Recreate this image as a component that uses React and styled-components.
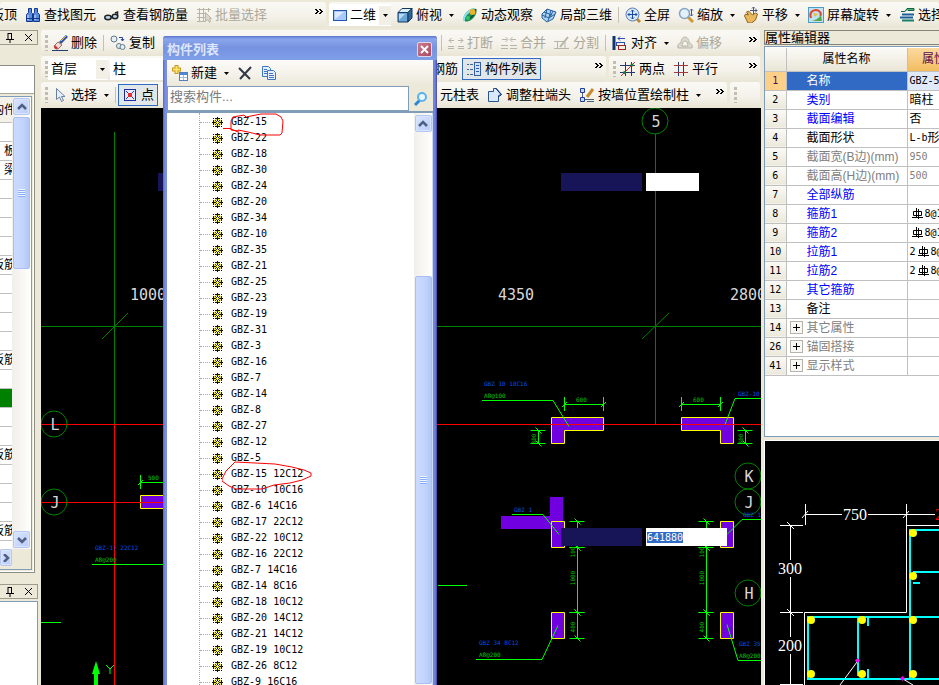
import React from 'react';
import styled, { createGlobalStyle, css } from 'styled-components';

const GlobalStyle = createGlobalStyle`
  * {
    box-sizing: border-box;
  }

  body {
    margin: 0;
    overflow: hidden;
    background: #ece9d8;
    color: #000;
    font: 13px/16px 'Liberation Sans', 'Noto Sans CJK SC', sans-serif;
  }

  button,
  input,
  select {
    margin: 0;
    padding: 0;
    border: 0;
    border-radius: 0;
    background: none;
    color: inherit;
    font: inherit;
    outline: none;
  }

  button {
    flex: none;
    white-space: nowrap;
  }

  svg {
    display: block;
    flex: none;
  }
`;

const Page = styled.div`
  height: 100vh;
  display: flex;
  flex-direction: column;
  position: relative;
`;

const Workspace = styled.div`
  flex: 1;
  min-height: 0;
  display: grid;
  grid-template-columns: 41px minmax(0, 1fr) 178px;
`;

const Center = styled.main`
  display: flex;
  flex-direction: column;
  min-height: 0;
`;

/* ---------- toolbars ---------- */

const ToolRow = styled.div`
  flex: none;
  display: flex;
  height: 26px;
  gap: 3px;
  padding-right: 1px;
  overflow: hidden;
`;

const TopRow = styled(ToolRow)`
  height: 30px;
  padding: 2px 0;
`;

const Band = styled.div`
  flex: ${(p) => (p.$width ? `0 0 ${p.$width}px` : '1')};
  min-width: 0;
  display: flex;
  align-items: center;
  overflow: hidden;
  border-radius: 3px;
  background: linear-gradient(#faf9f5, #f3f1e8 60%, #e9e5d5);
`;

/* the part of a row which sits left of the floating window */
const BandHead = styled.div`
  flex: 0 0 ${(p) => p.$width}px;
  display: flex;
  align-items: center;
  justify-content: ${(p) => (p.$end ? 'flex-end' : 'flex-start')};
  overflow: hidden;
`;

const Grip = styled.span`
  flex: none;
  width: 3px;
  height: 16px;
  margin: 0 0 0 4px;
  background: repeating-linear-gradient(#c1beb0 0 3px, transparent 3px 5px);
`;

const Separator = styled.span`
  flex: none;
  width: 1px;
  height: 16px;
  margin: 0 2px;
  background: #c5c2b5;
`;

const Tool = styled.button`
  display: flex;
  align-items: center;
  gap: 3px;
  height: 22px;
  padding: 0 4px;
  color: ${(p) => (p.disabled ? '#aca899' : '#000')};
  ${(p) =>
    p.$active &&
    css`
      padding: 0 3px;
      border: 1px solid #316ac5;
      background: #e1e6e8;
    `}
`;

const ArrowBox = styled.span`
  display: flex;
  margin-left: 4px;
`;

const Chevron = styled.button`
  display: flex;
  margin-left: auto;
  padding: 0 3px 8px;
`;

const Combo = styled.label`
  flex: 0 0 ${(p) => p.$width}px;
  display: flex;
  align-items: center;
  height: 22px;
  margin-right: 2px;
  padding-left: 3px;
  gap: 2px;
  background: #fff;

  select {
    flex: 1;
    min-width: 0;
    height: 20px;
    appearance: none;
  }

  > span {
    display: flex;
    align-items: center;
    justify-content: center;
    width: 12px;
    height: 19px;
    background: #f1efe6;
  }
`;

/* ---------- scroll bars ---------- */

const ScrollTrack = styled.div`
  flex: none;
  width: 19px;
  display: flex;
  flex-direction: column;
  align-items: center;
  padding: 1px;
  background: linear-gradient(90deg, #f1efea, #fefefb);
`;

const ScrollButton = styled.button`
  display: flex;
  align-items: center;
  justify-content: center;
  width: 17px;
  height: 17px;
  border: 1px solid #b5c7f0;
  border-radius: 2px;
  background: linear-gradient(135deg, #dbe5fe, #b8cbf9);
  box-shadow: inset 0 0 0 1px #d9e4fd;
`;

const Thumb = styled.div`
  width: 17px;
  height: ${(p) => p.$height};
  flex: ${(p) => (p.$height ? 'none' : '1')};
  margin: 2px 0 auto;
  display: flex;
  align-items: center;
  justify-content: center;
  border: 1px solid #a9bff0;
  border-radius: 2px;
  background: linear-gradient(90deg, #cbdafe, #c2d4fd 60%, #b3c8f6);

  &::after {
    content: '';
    width: 7px;
    height: 8px;
    background: repeating-linear-gradient(#eef4fe 0 1px, #8cb0f8 1px 2px);
  }
`;

/* ---------- left dock ---------- */

const LeftDock = styled.aside`
  display: flex;
  flex-direction: column;
  min-height: 0;
  padding-right: 3px;
`;

const DockTitle = styled.div`
  flex: none;
  display: flex;
  align-items: center;
  justify-content: flex-end;
  gap: 10px;
  height: 15px;
  padding-right: 4px;
  border: 1px solid #9d9a8e;
  border-left: 0;

  button {
    display: flex;
  }
`;

const DockPanel = styled.div`
  display: flex;
  flex-direction: column;
  height: 508px;
  margin: 20px 3px 11px 0;
  border: solid #8d8d88;
  border-width: 1px 1px 1px 0;
  box-shadow: inset -1px -1px 0 #fff;
`;

const DockHead = styled.div`
  height: 28px;
  border-bottom: 1px solid #a9a797;
  background: #fff;
`;

const DockBody = styled.div`
  flex: 1;
  min-height: 0;
  display: flex;
  margin: 2px 2px 0 0;
  border: solid #7f9db9;
  border-width: 1px 1px 0 0;
  background: #fff;
`;

const DockFoot = styled.div`
  display: flex;
  height: 21px;
  margin: 0 2px 2px 0;
  border: solid #7f9db9;
  border-width: 0 1px 1px 0;

  button {
    width: 12px;
  }
`;

const DockRows = styled.ul`
  flex: 1;
  min-width: 0;
  margin: 0;
  padding: 0;
  overflow: hidden;
  list-style: none;
  font-size: 12px;
`;

const DockRow = styled.li`
  display: flex;
  align-items: center;
  justify-content: flex-end;
  height: ${(p) => (p.$head ? 26 : 19)}px;
  margin-right: -4px;
  overflow: hidden;
  white-space: nowrap;
  border-bottom: 1px solid #c0c0c0;
  background: ${(p) => (p.$green ? '#008000' : p.$head ? '#f3f1e8' : '#fff')};
`;

const DockEmpty = styled.div`
  flex: 1;
  margin-top: 2px;
  border: solid #7f9db9;
  border-width: 1px 1px 0 0;
  background: #fff;
`;

/* ---------- drawing area ---------- */

const DrawingArea = styled.section`
  flex: 1;
  min-height: 0;
  position: relative;
  overflow: hidden;
  background: #000;
`;

const CanvasBar = styled.label`
  position: absolute;
  left: ${(p) => p.$x}px;
  top: ${(p) => p.$y}px;
  width: 81px;
  height: 18px;
  background: #181458;
`;

const CanvasInput = styled.input`
  position: absolute;
  left: 605px;
  top: ${(p) => p.$y}px;
  width: ${(p) => p.$width}px;
  height: 18px;
  padding: 0 1px;
  background: #fff;
  font: 10px/12px 'DejaVu Sans Mono', monospace;

  &::selection {
    background: #316ac5;
    color: #fff;
  }
`;

/* ---------- floating window ---------- */

const FloatWindow = styled.section`
  position: absolute;
  left: 163px;
  top: 36px;
  bottom: 0;
  width: 274px;
  display: flex;
  flex-direction: column;
  padding: 0 4px;
  border-radius: 3px 3px 0 0;
  background: linear-gradient(90deg, #5663c8, #7b8fe2 2px, #6f84dc 272px, #4a45a8);
`;

const WindowTitle = styled.header`
  display: flex;
  align-items: center;
  justify-content: space-between;
  height: 24px;
  margin: 0 -4px;
  padding: 3px 5px 0 4px;
  border-radius: 3px 3px 0 0;
  background: linear-gradient(#5a72d0, #8aa6ec 3px, #7692e0 12px, #7f9fe8);
  color: #dde5fa;
  font-weight: bold;
`;

const CloseButton = styled.button`
  display: flex;
  align-items: center;
  justify-content: center;
  width: 15px;
  height: 15px;
  border: 1px solid #dfd6ea;
  border-radius: 2px;
  background: linear-gradient(135deg, #cb7b8c, #a94a62);
`;

const WindowTools = styled.div`
  display: flex;
  align-items: center;
  height: 26px;
  padding-left: 1px;
  background: linear-gradient(#fcfbf8, #f3f1e8 60%, #ebe7d8);
`;

const SearchRow = styled.form`
  display: flex;
  height: 25px;
  background: #ece9d8;

  input {
    flex: 1;
    min-width: 0;
    padding: 0 2px 4px;
    border: 1px solid #7f9db9;
    background: #fff;
  }

  input::placeholder {
    color: #7b7b7b;
    opacity: 1;
  }

  button {
    width: 24px;
    display: flex;
    align-items: center;
    justify-content: center;
  }
`;

const TreeBox = styled.div`
  flex: 1;
  min-height: 0;
  display: flex;
  position: relative;
  overflow: hidden;
  border-top: 2px solid #7f9db9;
  background: #fff;
`;

const Tree = styled.ul`
  flex: 1;
  margin: 0 0 0 32px;
  padding: 1px 0 0;
  list-style: none;
  border-left: 1px dotted #aca899;
`;

const TreeItem = styled.li`
  display: flex;
  align-items: center;
  height: 16px;
  white-space: pre;
  font: 10px/16px 'DejaVu Sans Mono', monospace;

  &::before {
    content: '';
    width: 10px;
    margin-right: 2px;
    border-top: 1px dotted #aca899;
  }

  svg {
    margin-right: 8px;
  }
`;

const TreeScroll = styled(ScrollTrack)`
  border-right: 1px solid #cdd9ef;
  padding-top: 2px;
`;

const TrackGap = styled.span`
  flex: 0 0 142px;
`;

const Markup = styled.svg`
  position: absolute;
  left: 55px;
  top: 0;
  pointer-events: none;
`;

/* ---------- right dock ---------- */

const RightDock = styled.aside`
  display: flex;
  flex-direction: column;
  min-height: 0;
  overflow: hidden;
  padding-left: 3px;
`;

const PropertyTitle = styled.h2`
  flex: none;
  height: 15px;
  margin: 0 0 1px;
  border: solid #85837b;
  border-width: 1px 0 1px 1px;
  font-size: 13px;
  font-weight: normal;
  line-height: 13px;
`;

const PropertyBox = styled.div`
  flex: 0 0 391px;
  padding: 1px 0;
  overflow: hidden;
  border: 1px solid #7f9db9;
  border-right: 0;
  background: #fff;
`;

const PropertyTable = styled.table`
  width: 208px;
  table-layout: fixed;
  border-collapse: collapse;
  font-size: 12px;

  th,
  td {
    height: 19px;
    padding: 0 0 0 2px;
    overflow: hidden;
    white-space: nowrap;
    text-align: left;
    font-weight: normal;
    line-height: 16px;
    border: solid #c0c0c0;
    border-width: 0 1px 1px 0;
  }

  thead th {
    height: 23px;
    padding: 0;
    text-align: center;
    background: linear-gradient(#fbfaf6, #e9e6d7);
  }

  thead th:last-child {
    background: linear-gradient(#fcd9a0, #f2bd60);
    color: #5b0a4f;
  }

  tbody th {
    padding: 0;
    text-align: center;
    font: 10px/16px 'DejaVu Sans Mono', monospace;
    background: linear-gradient(#fbfaf6, #ebe8da);
  }
`;

const NumberCell = styled.th`
  && {
    ${(p) => p.$selected && 'background: #fdd08a; color: #5b0a4f;'}
  }
`;

const NameCell = styled.td`
  && {
    padding-left: ${(p) => (p.$group ? 3 : 20)}px;
  }
  color: ${(p) => p.$color};
  background: ${(p) => (p.$selected ? '#316ac5' : '#fff')};
`;

const ValueCell = styled.td`
  color: ${(p) => p.$color};
  background: ${(p) => (p.$selected ? '#dfe9f8' : '#fff')};
`;

const Latin = styled.span`
  font: 10px/16px 'DejaVu Sans Mono', monospace;
`;

const CellFlex = styled.span`
  display: flex;
  align-items: center;
  gap: ${(p) => p.$gap}px;
`;

const Expand = styled.button`
  display: flex;
  align-items: center;
  justify-content: center;
  width: 13px;
  height: 13px;
  border: 1px solid #b5b3aa;
  background: #f8f8f5;
`;

const SectionView = styled.div`
  flex: 1;
  min-height: 0;
  margin-top: 3px;
  overflow: hidden;
  border: solid #fff;
  border-width: 1px 0 0 1px;
  background: #000;
`;

/* ---------- icons ---------- */

const shapes = {
  binoculars: (
    <g stroke="#10398c" fill="#5b8be0">
      <path d="M3.500 1.500h3v4l1 1v8h-6v-7l2-2zM9.500 1.500h3v4l2 2v7h-6v-8l1-1z" />
      <path d="M3 8v5M10 8v5" stroke="#dbe9ff" />
      <path d="M1.500 11.500h6M8.500 11.500h6" />
    </g>
  ),
  glasses: (
    <g fill="#b9d4ea" stroke="#222" strokeWidth="1.500">
      <ellipse cx="4" cy="10.500" rx="3.200" ry="2.200" />
      <ellipse cx="11" cy="9.500" rx="2.800" ry="2.200" />
      <path d="M7 10h2M13.500 9V5l-2.500 1" fill="none" />
    </g>
  ),
  batch: (
    <g stroke="#b7b4a8" fill="none">
      <path d="M1 2.500h14M1 6.500h9M1 10.500h8M1 14.500h8M3.500 1v14M7.500 1v14M12.500 1v4" />
      <path d="M9.500 5.500v9l2-2 2 3 1-1-1-3h2z" fill="#d9d6ca" />
    </g>
  ),
  plane: (
    <g>
      <rect x="1.500" y="3.500" width="13" height="10" fill="#a9c9fb" stroke="#2354b4" />
      <path d="M3 12V5h9z" fill="#dcebff" />
    </g>
  ),
  cube: (
    <g stroke="#17375f">
      <path d="M1 5.500l4-4h10l-4 4z" fill="#d9f0ff" />
      <path d="M1 5.500h10v9.500H1z" fill="#6aa7d8" />
      <path d="M11 5.500l4-4V11l-4 4z" fill="#2d6699" />
      <path d="M2 7h6l-6 6z" fill="#b9dcf4" stroke="none" />
    </g>
  ),
  orbit: (
    <g>
      <ellipse cx="8" cy="8" rx="4.500" ry="8" transform="rotate(45 8 8)" fill="#1d8f50" />
      <path d="M2 14c-1-4 3-9 9-12" stroke="#8de0f4" strokeWidth="2" fill="none" />
      <path d="M7 12c3-2 6-5 7-10" stroke="#0b5335" fill="none" strokeWidth="1.500" />
      <circle cx="10.500" cy="5" r="3" fill="#e8b22a" />
      <circle cx="6" cy="11" r="2" fill="#35c26b" />
    </g>
  ),
  mesh: (
    <g stroke="#2a5f9e" fill="#a9d4f4">
      <path d="M1 7l5-5 9 3-3 7-6 3-5-4z" />
      <path d="M3 5l8 3M6 2l-2 9M10 3l-3 11M1 8l7 3 6-4M12 4l-3 6" fill="none" />
    </g>
  ),
  fullscreen: (
    <g>
      <path d="M11 11l4 4" stroke="#b98b30" strokeWidth="3" />
      <circle cx="7.500" cy="7.500" r="6.500" fill="#d5e6fa" stroke="#5f7fae" />
      <path d="M7.500 3v9M3 7.500h9M6 4.500l1.500-1.500L9 4.500M6 10.500L7.500 12 9 10.500M4.500 6L3 7.500 4.500 9M10.500 6L12 7.500 10.500 9" stroke="#1b4a9c" fill="none" />
    </g>
  ),
  zoom: (
    <g>
      <path d="M10 10l5 5" stroke="#cf9a35" strokeWidth="3" />
      <circle cx="6.500" cy="6.500" r="5" fill="#e2f1fb" stroke="#88a4c4" strokeWidth="1.500" />
      <path d="M13.500 2v7M12 3.500L13.500 2 15 3.500M12 7.500L13.500 9 15 7.500" stroke="#365a9a" fill="none" />
    </g>
  ),
  hand: (
    <g>
      <path d="M1.500 9l1-2 3 1-2-3 2-1 4 4 3-2 2 1-2 6-4 3H5z" fill="#e8b85a" stroke="#8c6220" />
      <path d="M10.500 0v7M7 3.500h7M9 1.500L10.500 0 12 1.500M12.500 2L14 3.500 12.500 5" stroke="#4c5875" fill="none" />
    </g>
  ),
  rotate: (
    <g>
      <rect x=".5" y=".5" width="15" height="15" fill="#bfe3f4" stroke="#4e9cc4" />
      <path d="M3 11C1 6 4 3 8 3s6 4 4 6" stroke="#e0432f" strokeWidth="2" fill="none" />
      <path d="M5 6l5 1-3 3z" fill="#e8c12c" />
      <path d="M4 14c3-1 6-2 9-6l1 6z" fill="#56a944" />
    </g>
  ),
  floors: (
    <g>
      <path d="M2 4.500h4l2-3h7v2H9" fill="#4bb07a" stroke="#146047" />
      <path d="M3 7.500h12M1 10.500h13" stroke="#185f9c" strokeWidth="2" />
      <path d="M3 13.500h12" stroke="#1b8068" strokeWidth="2" />
    </g>
  ),
  erase: (
    <g>
      <path d="M15 1L8 8" stroke="#31539c" strokeWidth="3" />
      <path d="M14 1L9 6" stroke="#e9b93f" />
      <path d="M6 7l4 3-4 4H4L2 11z" fill="#f0ded9" stroke="#9e6868" />
      <path d="M3 10l3 3-1 1H3l-1-2z" fill="#c93535" />
      <path d="M0 15.500h16" stroke="#223d73" />
    </g>
  ),
  copyTool: (
    <g fill="#e5eef4" stroke="#607886">
      <circle cx="4" cy="4" r="3" />
      <path d="M9 2.500h3.500v3M11 4l1.500 2L14 4" fill="none" stroke="#25439b" />
      <circle cx="9" cy="11" r="2.500" />
      <circle cx="12.500" cy="12" r="2.500" />
    </g>
  ),
  breakLine: (
    <g stroke="#b7b4a8" fill="none">
      <path d="M1 5.500h5M10 5.500h5M3.500 3L1 5.500 3.500 8M12.500 3L15 5.500 12.500 8" />
      <path d="M0 11.500h6M10 11.500h6M0 13.500h6M10 13.500h6" />
    </g>
  ),
  merge: (
    <g stroke="#b7b4a8" fill="none">
      <path d="M1 4.500h5M10 4.500h5M4.500 2L7 4.500 4.500 7M11.500 2L9 4.500 11.500 7" />
      <path d="M0 10.500h7M9 10.500h7M0 13.500h7M9 13.500h7" />
    </g>
  ),
  split: (
    <g stroke="#b7b4a8" fill="none">
      <path d="M0 6.500h10M0 13.500h15M3.500 13V7M11 13V7" />
      <path d="M14 2L6 12" strokeWidth="2" />
    </g>
  ),
  align: (
    <g fill="none">
      <path d="M2 1v14" stroke="#11376d" strokeWidth="3" />
      <path d="M6 3.500h7M8 1.500L6 3.500l2 2" stroke="#254fae" />
      <rect x="4.500" y="7.500" width="8" height="3" stroke="#254fae" />
      <rect x="6.500" y="10.500" width="7" height="4" stroke="#a12121" />
    </g>
  ),
  offset: (
    <g stroke="#b7b4a8" fill="#dcd9ce">
      <path d="M1 13c-1-3 1-5 3-5 0-4 2-6 4-6s4 2 4 6c2 0 4 2 3 5z" />
      <path d="M5 11c0-2 1-5 3-5s3 3 3 5z" fill="#f5f3ec" />
    </g>
  ),
  list: (
    <g>
      <path d="M1 3.500h2M1 8.500h2M1 13.500h2M4 3.500h3M4 8.500h3M4 13.500h3" stroke="#43658d" />
      <rect x="8.500" y="1.500" width="6" height="13" fill="#cfe2fb" stroke="#355f9f" />
      <path d="M10 4.500h3M10 7.500h3M10 10.500h3" stroke="#2d58ad" />
    </g>
  ),
  twoPoint: (
    <g stroke="#24356f" fill="none">
      <path d="M5.500 1v14M11.500 1v14M0 4.500h15M0 11.500h15" />
      <path d="M1 15L15 1" stroke="#d02a2a" />
      <circle cx="4.500" cy="11.500" r="1.500" fill="#1c7c25" stroke="none" />
      <circle cx="12" cy="4" r="1.500" fill="#1c7c25" stroke="none" />
    </g>
  ),
  parallel: (
    <g fill="none">
      <path d="M5.500 1v14M10.500 1v14" stroke="#24356f" />
      <path d="M1 4.500h14M1 11.500h14" stroke="#a33b3b" />
    </g>
  ),
  cursor: <path d="M4.500 1.500v11l3-2.500 2 4.500 2-1-2-4h3.500z" fill="#e6eefb" stroke="#6a7f9f" />,
  point: (
    <g>
      <rect x="2.500" y="2.500" width="11" height="11" fill="#e5e8ff" stroke="#1f2ca0" />
      <path d="M4 4l8 8M12 4l-8 8" stroke="#2d3cae" />
      <rect x="6" y="6" width="4" height="4" fill="#e03131" />
    </g>
  ),
  adjust: (
    <g fill="none">
      <path d="M1.500 4.500h5v-3h3l5 6-3 1v6h-10z" fill="#d9e8fa" stroke="#2c5391" />
      <path d="M8.500 1l6 7M11 10l3-2" stroke="#102f74" />
    </g>
  ),
  wallColumn: (
    <g fill="none">
      <path d="M1.500 1.500h4v4h-4zM1.500 10.500h4v4h-4z" stroke="#24409a" fill="#c6d8f8" />
      <path d="M3.500 6v4M6 12.500h9M8 14.500h7" stroke="#4e6079" />
      <path d="M14 2L8 10" stroke="#c88a31" strokeWidth="3" />
    </g>
  ),
  create: (
    <g>
      <path d="M4.500 0v9M0 4.500h9" stroke="#c8981c" strokeWidth="4" />
      <path d="M4.500 1v7M1 4.500h7" stroke="#fde36a" strokeWidth="2" />
      <rect x="7.500" y="7.500" width="8" height="8" fill="#fff" stroke="#5580bf" />
      <path d="M8 9h7" stroke="#4d88d8" strokeWidth="2" />
      <path d="M8 12.500h7M11.500 10v5" stroke="#9fbde6" />
    </g>
  ),
  remove: <path d="M2 3l11 11M14 2L3 14" stroke="#303846" strokeWidth="2" fill="none" />,
  copyDoc: (
    <g stroke="#4175bd" fill="#e3effc">
      <path d="M1.500 1.500h6l2 2v8h-8z" />
      <path d="M3 4.500h3M3 6.500h3M3 8.500h3" />
      <path d="M6.500 5.500h6l2 2v7h-8z" />
      <path d="M8 8.500h4M8 10.500h5M8 12.500h5" />
    </g>
  ),
  search: (
    <g fill="none">
      <path d="M6.500 9.500L2 14" stroke="#2f86d2" strokeWidth="3" />
      <circle cx="9" cy="6" r="4" fill="#e8f7ff" stroke="#5db1ea" strokeWidth="2" />
    </g>
  ),
};

const Icon = ({ name }) => (
  <svg width="16" height="16" viewBox="0 0 16 16" aria-hidden="true">
    {shapes[name]}
  </svg>
);

const Arrow = () => (
  <svg width="5" height="3" viewBox="0 0 5 3" aria-hidden="true">
    <path d="M0 0h5L2.500 3z" />
  </svg>
);

const angles = {
  up: 'M1 6l4-4 4 4',
  down: 'M1 2l4 4 4-4',
  right: 'M3 0l4 4-4 4',
};

const Angle = ({ to }) => (
  <svg width="10" height="8" viewBox="0 0 10 8" aria-hidden="true">
    <path d={angles[to]} fill="none" stroke="#4d6185" strokeWidth="2.500" />
  </svg>
);

const Cross = ({ color = '#000', width = 1 }) => (
  <svg width="9" height="9" viewBox="0 0 9 9" aria-hidden="true">
    <path d="M1 1l7 7M8 1L1 8" stroke={color} strokeWidth={width} />
  </svg>
);

const Pin = () => (
  <svg width="8" height="10" viewBox="0 0 8 10" aria-hidden="true">
    <path d="M2 0v6M2 .5h4M5.500 0v6M0 6.500h8M4 6v4" stroke="#000" fill="none" />
  </svg>
);

const Gear = () => (
  <svg width="11" height="11" viewBox="0 0 11 11" shapeRendering="crispEdges" aria-hidden="true">
    <path d="M5 0h1v11H5zM0 5h11v1H0zM3 1h2v2H3zM6 1h2v2H6zM3 8h2v2H3zM6 8h2v2H6zM1 3h2v2H1zM1 6h2v2H1zM8 3h2v2H8zM8 6h2v2H8z" fill="#111" />
    <path d="M1 1h1v1H1zM9 1h1v1H9zM1 9h1v1H1zM9 9h1v1H9z" fill="#111" />
    <path d="M3 2h2v1H3zM6 2h2v1H6zM3 8h2v1H3zM6 8h2v1H6zM2 3h2v2H2zM7 3h2v2H7zM2 6h2v2H2zM7 6h2v2H7zM4 4h3v3H4z" fill="#f4ec2c" />
    <path d="M4 4h1v1H4zM6 4h1v1H6zM4 6h1v1H4zM6 6h1v1H6zM3 3h1v1H3zM7 3h1v1H7zM3 7h1v1H3zM7 7h1v1H7z" fill="#333" />
    <path d="M5 5h1v1H5z" fill="#fff" />
  </svg>
);

const Rebar = () => (
  <svg width="11" height="11" viewBox="0 0 11 11" aria-hidden="true">
    <path d="M1.500 3.500h8v4h-8zM4.500 0v10M6.500 1v10M0 9.500h11" fill="none" stroke="#000" />
  </svg>
);

const ToolButton = ({ icon, label, menu, disabled, active }) => (
  <Tool type="button" disabled={disabled} $active={active}>
    {icon && <Icon name={icon} />}
    <span>{label}</span>
    {menu && (
      <ArrowBox>
        <Arrow />
      </ArrowBox>
    )}
  </Tool>
);

const More = () => (
  <Chevron type="button" aria-label="更多">
    <svg width="8" height="5" viewBox="0 0 8 5" shapeRendering="crispEdges">
      <path d="M0 0h2v1h1v1h1v1H3v1H2v1H0V4h1V3h1V2H1V1H0zM4 0h2v1h1v1h1v1H7v1H6v1H4V4h1V3h1V2H5V1H4z" />
    </svg>
  </Chevron>
);

const ComboBox = ({ width, icon, label, value }) => (
  <Combo $width={width}>
    {icon && <Icon name={icon} />}
    <select aria-label={label} defaultValue={value}>
      <option>{value}</option>
    </select>
    <span>
      <Arrow />
    </span>
  </Combo>
);

/* ---------- data ---------- */

const columns = [
  '15', '22', '18', '30', '24', '20', '34', '10', '35', '21', '25', '23',
  '19', '31', '3', '16', '7', '14', '8', '27', '12', '5', '15 12C12',
  '10 10C16', '6 14C16', '17 22C12', '22 10C12', '16 22C12', '7 14C16',
  '14 8C16', '18 10C12', '20 14C12', '21 14C12', '19 10C12', '26 8C12',
  '9 16C16',
];

const dockRows = [
  '', '板', '梁', '', '', '', '', '板筋', '', '', '', '', '板筋',
  '', 'green', '', '', '板筋', '', '', '', '板筋',
];

const properties = [
  { no: 1, name: '名称', latin: 'GBZ-5', color: '#fff', selected: true },
  { no: 2, name: '类别', value: '暗柱', color: '#00f' },
  { no: 3, name: '截面编辑', value: '否', color: '#00f' },
  { no: 4, name: '截面形状', latin: 'L-b', value: '形', color: '#000' },
  { no: 5, name: '截面宽(B边)(mm)', latin: '950', color: '#808080', muted: true },
  { no: 6, name: '截面高(H边)(mm)', latin: '500', color: '#808080', muted: true },
  { no: 7, name: '全部纵筋', color: '#00f' },
  { no: 8, name: '箍筋1', latin: '8@100', rebar: '', color: '#00f' },
  { no: 9, name: '箍筋2', latin: '8@100', rebar: '', color: '#00f' },
  { no: 10, name: '拉筋1', latin: '8@100', rebar: '2', color: '#00f' },
  { no: 11, name: '拉筋2', latin: '8@100', rebar: '2', color: '#00f' },
  { no: 12, name: '其它箍筋', color: '#00f' },
  { no: 13, name: '备注', color: '#000' },
  { no: 14, name: '其它属性', color: '#808080', group: true },
  { no: 26, name: '锚固搭接', color: '#808080', group: true },
  { no: 41, name: '显示样式', color: '#808080', group: true },
];

/* ---------- plan drawing ---------- */

const AxisMark = ({ x, y, label }) => (
  <g>
    <circle cx={x} cy={y} r="13" fill="none" stroke="#008000" />
    <text x={x + 1} y={y + 6} textAnchor="middle" fill="#d8d8d8" fontSize="15">
      {label}
    </text>
  </g>
);

const Note = ({ x, y, color = '#00c800', children }) => (
  <text x={x} y={y} fill={color} fontSize="6">
    {children}
  </text>
);

const Size = ({ x, y, children }) => (
  <text
    transform={`translate(${x} ${y}) rotate(-90)`}
    textAnchor="middle"
    fill="#00c800"
    fontSize="6"
  >
    {children}
  </text>
);

const Ticks = ({ x, y, height }) => (
  <path
    d={`M${x} ${y}v${height}M${x - 8} ${y}h15M${x - 8} ${y + height}h15
      M${x - 3} ${y - 3}l6 6M${x - 3} ${y + height - 3}l6 6`}
  />
);

const PlanDrawing = () => (
  <svg width="720" height="577" viewBox="41 108 720 577" fontFamily="DejaVu Sans Mono, monospace">
    <g stroke="#008000" fill="none">
      <path d="M114.500 132v292M655.500 134v290M41 326.500h720" />
      <path d="M102 339l26-26M642 339l27-26" />
    </g>
    <g fill="#7000e0">
      <path d="M550 497h13v32h-62v-13h49z" />
      <g stroke="#ff0">
        <path d="M140.500 495.500h40v13h-40z" />
        <path d="M551.500 417.500h52v13h-39v13h-13z" />
        <path d="M681.500 417.500h52v26h-13v-13h-39z" />
        <path d="M551.500 521.500h13v26h-13zM720.500 521.500h13v26h-13z" />
        <path d="M551.500 612.500h13v26h-13zM720.500 612.500h13v26h-13z" />
      </g>
    </g>
    <path d="M41 424.500h720M41 502.500h130M114.500 424v261" stroke="#f00" />
    <g stroke="#0f0" fill="none">
      <path d="M140.500 475v14M140 482.500h30M138 485l5-5M92 564.500h80M41 622.500h20M438 585.500h29" />
      <path d="M482 400.500h71l16 26M512 514.500h31l16 20M476 659.500h66l16-34" />
      <path d="M761 398.500h-26l-10 26M761 519.500h-19l-15 15M761 660.500h-23l-11-36" />
      <path d="M564.500 397v14M603.500 397v14M564 404.500h39M562 407l5-5M601 407l5-5" />
      <path d="M681.500 397v14M720.500 397v14M681 404.500h39M679 407l5-5M718 407l5-5" />
      <Ticks x={538.5} y={430.5} height={13} />
      <Ticks x={745.5} y={430.5} height={13} />
      <Ticks x={577.5} y={521.5} height={26} />
      <Ticks x={577.5} y={547.5} height={65} />
      <Ticks x={577.5} y={612.5} height={26} />
      <Ticks x={706.5} y={521.5} height={26} />
      <Ticks x={706.5} y={547.5} height={65} />
      <Ticks x={706.5} y={612.5} height={26} />
      <path d="M106 665l4 4 4-4M110 669v5" />
    </g>
    <path d="M94 685v-11h-2l4-13 4 13h-2v11z" fill="#0f0" />
    <AxisMark x={54} y={424} label="L" />
    <AxisMark x={54} y={502} label="J" />
    <AxisMark x={655} y={121} label="5" />
    <AxisMark x={748} y={476} label="K" />
    <AxisMark x={748} y={502} label="J" />
    <AxisMark x={748} y={593} label="H" />
    <g fill="#d8d8d8" fontSize="15">
      <text x="130" y="300">1000</text>
      <text x="498" y="300">4350</text>
      <text x="730" y="300">2800</text>
    </g>
    <Note x={95} y={550} color="#0050e0">GBZ-17 22C12</Note>
    <Note x={95} y={562}>A8@200</Note>
    <Note x={148} y={480}>500</Note>
    <Note x={484} y={386} color="#0050e0">GBZ 10 10C16</Note>
    <Note x={484} y={398}>A8@100</Note>
    <Note x={576} y={402}>600</Note>
    <Note x={693} y={402}>600</Note>
    <Note x={738} y={396} color="#0050e0">GBZ-10</Note>
    <Note x={514} y={512} color="#0050e0">GBZ 1</Note>
    <Note x={743} y={517} color="#0050e0">GBZ 1</Note>
    <Note x={479} y={645} color="#0050e0">GBZ 34 8C12</Note>
    <Note x={479} y={657}>A8@200</Note>
    <Note x={739} y={646} color="#0050e0">GBZ 35</Note>
    <Note x={739} y={658}>A8@200</Note>
    <Size x={536} y={439}>300</Size>
    <Size x={743} y={439}>300</Size>
    <Size x={575} y={552}>100</Size>
    <Size x={575} y={578}>1000</Size>
    <Size x={575} y={627}>400</Size>
    <Size x={704} y={552}>100</Size>
    <Size x={704} y={578}>1000</Size>
    <Size x={704} y={627}>400</Size>
  </svg>
);

const bars = [
  [811, 620], [862, 620], [913, 620], [811, 674],
  [862, 674], [913, 674], [913, 533], [913, 576],
];

const SectionDrawing = () => (
  <svg width="240" height="280" viewBox="765 441 240 280" fontFamily="Liberation Serif, serif" fontSize="16">
    <g stroke="#fff" fill="none">
      <path d="M805.500 504v21M906.500 504v108.500h-102V720M906 525.500h100" />
      <path d="M805 514.500h37M868 514.500h67M802 518l6-7M903 518l6-7" />
      <path d="M780 525.500h23M780 612.500h23M780 684.500h23M790.500 525v35M790.500 577v60M790.500 654v40" />
      <path d="M787 522l7 7M787 609l7 7M857 662l-17 23M903 679l10 6" />
    </g>
    <path
      d="M1000 530h-90v149M913 572h90M913 583h7M1000 617H808v62h190M858 617v59M868 617v9M868 669v9"
      stroke="#0ff"
      strokeWidth="2"
      fill="none"
    />
    {bars.map(([x, y]) => (
      <circle key={`${x}-${y}`} cx={x} cy={y} r="4" fill="#ff0" />
    ))}
    <path d="M857.500 658l2.500 2.500-2.500 2.500-2.500-2.500zM902.500 676l2.500 2.500-2.500 2.500-2.500-2.500z" fill="#f0f" />
    <g fill="#fff">
      <text x="843" y="520">750</text>
      <text x="778" y="574">300</text>
      <text x="778" y="651">200</text>
      <text x="935" y="520" fill="#f00">200</text>
    </g>
  </svg>
);

/* ---------- page parts ---------- */

const DockTitleBar = () => (
  <DockTitle>
    <button type="button" aria-label="固定">
      <Pin />
    </button>
    <button type="button" aria-label="关闭">
      <Cross />
    </button>
  </DockTitle>
);

const ComponentWindow = () => (
  <FloatWindow>
    <WindowTitle>
      <span>构件列表</span>
      <CloseButton type="button" aria-label="关闭">
        <Cross color="#fff" width={2} />
      </CloseButton>
    </WindowTitle>
    <WindowTools>
      <ToolButton icon="create" label="新建" menu />
      <Tool type="button" aria-label="删除构件">
        <Icon name="remove" />
      </Tool>
      <Tool type="button" aria-label="复制构件">
        <Icon name="copyDoc" />
      </Tool>
    </WindowTools>
    <SearchRow>
      <input aria-label="搜索构件" placeholder="搜索构件..." />
      <button type="button" aria-label="搜索">
        <Icon name="search" />
      </button>
    </SearchRow>
    <TreeBox>
      <Tree>
        {columns.map((name) => (
          <TreeItem key={name}>
            <Gear />
            GBZ-{name}
          </TreeItem>
        ))}
      </Tree>
      <TreeScroll>
        <ScrollButton type="button" aria-label="向上">
          <Angle to="up" />
        </ScrollButton>
        <TrackGap />
        <Thumb />
      </TreeScroll>
      <Markup width="100" height="380" viewBox="222 113 100 380" fill="none" stroke="#f00">
        <path d="M223 128.500h7l9 4M239 131l-8-1v-9l2-4 11-2 2 2 15-3h15l5 3 2 4-1 12-2 2h-20l-12-3-10-2" />
        <path d="M222 479l4-8 9-9 40 2 17 3 12 3 7 3v3l-9 4-12 3-16 2-12 4h-26l-7-3-7-5z" />
      </Markup>
    </TreeBox>
  </FloatWindow>
);

const PropertyEditor = () => (
  <PropertyBox>
    <PropertyTable>
      <colgroup>
        <col width="21" />
        <col width="121" />
        <col width="66" />
      </colgroup>
      <thead>
        <tr>
          <th />
          <th>属性名称</th>
          <th>属性值</th>
        </tr>
      </thead>
      <tbody>
        {properties.map((p) => (
          <tr key={p.no}>
            <NumberCell $selected={p.selected}>{p.no}</NumberCell>
            <NameCell $color={p.color} $selected={p.selected} $group={p.group}>
              {p.group ? (
                <CellFlex $gap={4}>
                  <Expand type="button" aria-label="展开">
                    <svg width="7" height="7" viewBox="0 0 7 7">
                      <path d="M0 3.500h7M3.500 0v7" stroke="#000" />
                    </svg>
                  </Expand>
                  {p.name}
                </CellFlex>
              ) : (
                p.name
              )}
            </NameCell>
            <ValueCell $color={p.muted ? '#808080' : '#000'} $selected={p.selected}>
              <CellFlex $gap={p.rebar === undefined ? 0 : 2}>
                {p.rebar !== undefined && (
                  <>
                    <Latin>{p.rebar}</Latin>
                    <Rebar />
                  </>
                )}
                {p.latin && <Latin>{p.latin}</Latin>}
                {p.value}
              </CellFlex>
            </ValueCell>
          </tr>
        ))}
      </tbody>
    </PropertyTable>
  </PropertyBox>
);

const App = () => {
  return (
    <Page>
      <GlobalStyle />
      <TopRow>
        <Band $width={326}>
          <BandHead $width={21} $end>
            <ToolButton label="板顶" />
          </BandHead>
          <ToolButton icon="binoculars" label="查找图元" />
          <ToolButton icon="glasses" label="查看钢筋量" />
          <ToolButton icon="batch" label="批量选择" disabled />
          <More />
        </Band>
        <Band>
          <ComboBox width={60} icon="plane" label="视图" value="二维" />
          <ToolButton icon="cube" label="俯视" menu />
          <ToolButton icon="orbit" label="动态观察" />
          <ToolButton icon="mesh" label="局部三维" />
          <Separator />
          <ToolButton icon="fullscreen" label="全屏" />
          <ToolButton icon="zoom" label="缩放" menu />
          <ToolButton icon="hand" label="平移" menu />
          <ToolButton icon="rotate" label="屏幕旋转" menu />
          <ToolButton icon="floors" label="选择楼层" />
        </Band>
      </TopRow>

      <Workspace>
        <LeftDock>
          <DockTitleBar />
          <DockPanel>
            <DockHead />
            <DockBody>
              <DockRows>
                <DockRow $head>构件</DockRow>
                {dockRows.map((text, i) => (
                  <DockRow key={i} $green={text === 'green'}>
                    {text === 'green' ? '' : text}
                  </DockRow>
                ))}
              </DockRows>
              <ScrollTrack>
                <ScrollButton type="button" aria-label="向上">
                  <Angle to="up" />
                </ScrollButton>
                <Thumb $height="152px" />
                <ScrollButton type="button" aria-label="向下">
                  <Angle to="down" />
                </ScrollButton>
              </ScrollTrack>
            </DockBody>
            <DockFoot>
              <ScrollButton type="button" aria-label="向右">
                <Angle to="right" />
              </ScrollButton>
            </DockFoot>
          </DockPanel>
          <DockTitleBar />
          <DockEmpty />
        </LeftDock>

        <Center>
          <ToolRow>
            <Band>
              <BandHead $width={398}>
                <Grip />
                <ToolButton icon="erase" label="删除" />
                <Separator />
                <ToolButton icon="copyTool" label="复制" />
              </BandHead>
              <Separator />
              <ToolButton icon="breakLine" label="打断" disabled />
              <ToolButton icon="merge" label="合并" disabled />
              <ToolButton icon="split" label="分割" disabled />
              <Separator />
              <ToolButton icon="align" label="对齐" menu />
              <ToolButton icon="offset" label="偏移" disabled />
              <More />
            </Band>
          </ToolRow>
          <ToolRow>
            <Band $width={565}>
              <BandHead $width={421}>
                <Grip />
                <ComboBox width={60} label="楼层" value="首层" />
                <ComboBox width={100} label="构件类型" value="柱" />
                <BandHead $width={250} $end>
                  <ToolButton label="钢筋" />
                </BandHead>
              </BandHead>
              <ToolButton icon="list" label="构件列表" active />
              <More />
            </Band>
            <Band>
              <Grip />
              <ToolButton icon="twoPoint" label="两点" />
              <ToolButton icon="parallel" label="平行" />
              <More />
            </Band>
          </ToolRow>
          <ToolRow>
            <Band $width={686}>
              <BandHead $width={395}>
                <Grip />
                <ToolButton icon="cursor" label="选择" menu />
                <Separator />
                <ToolButton icon="point" label="点" active />
              </BandHead>
              <ToolButton label="元柱表" />
              <ToolButton icon="adjust" label="调整柱端头" />
              <ToolButton icon="wallColumn" label="按墙位置绘制柱" menu />
              <More />
            </Band>
            <Band>
              <Grip />
            </Band>
          </ToolRow>
          <DrawingArea>
            <PlanDrawing />
            <CanvasBar $x={117} $y={65} />
            <CanvasBar $x={520} $y={65} htmlFor="coord-x" />
            <CanvasInput $y={65} $width={53} id="coord-x" aria-label="X" />
            <CanvasBar $x={520} $y={420} htmlFor="coord-y" />
            <CanvasInput
              $y={420}
              $width={81}
              id="coord-y"
              aria-label="Y"
              defaultValue="641880"
              autoFocus
              onFocus={(e) => e.target.select()}
            />
          </DrawingArea>
        </Center>

        <RightDock>
          <PropertyTitle>属性编辑器</PropertyTitle>
          <PropertyEditor />
          <SectionView>
            <SectionDrawing />
          </SectionView>
        </RightDock>
      </Workspace>

      <ComponentWindow />
    </Page>
  );
};

export default App;
